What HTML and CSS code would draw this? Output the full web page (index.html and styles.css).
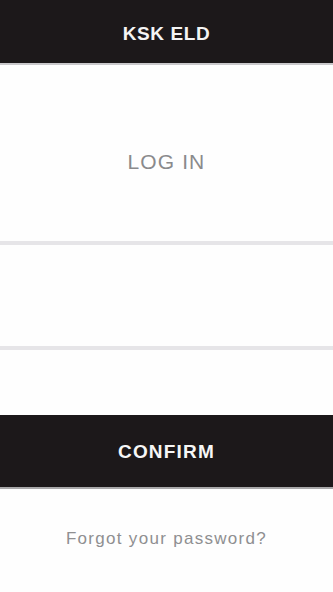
FILE: index.html
```html
<!DOCTYPE html>
<html>
<head>
<meta charset="utf-8">
<link rel="stylesheet" href="styles.css">
</head>
<body>
<div class="app">
  <header class="topbar"><span class="title">KSK ELD</span></header>
  <section class="heading"><h1 class="login">LOG IN</h1></section>
  <div class="field"></div>
  <div class="field field-last"></div>
  <button class="confirm">CONFIRM</button>
  <a class="forgot">Forgot your password?</a>
</div>
</body>
</html>
```
FILE: styles.css
```css
html, body {
  margin: 0;
  padding: 0;
  background: #fefefe;
}
body {
  font-family: "Liberation Sans", Arial, sans-serif;
}
.app {
  width: 333px;
  height: 592px;
  display: flex;
  flex-direction: column;
}
.topbar {
  padding-top: 4px;
  box-sizing: border-box;
  background: #1c181a;
  border-bottom: 2px solid #c9c8cb;
  display: flex;
  align-items: center;
  justify-content: center;
  flex: 0 0 65px;
}
.title {
  color: #f4f4f4;
  font-weight: bold;
  font-size: 19px;
  letter-spacing: 0.6px;
}
.heading {
  height: 176px;
  padding-top: 17px;
  box-sizing: border-box;
  display: flex;
  align-items: center;
  justify-content: center;
}
.login {
  margin: 0;
  font-weight: normal;
  font-size: 21px;
  color: #8a8a8c;
  letter-spacing: 1.1px;
}
.field {
  height: 101px;
  border-top: 4px solid #e6e5e8;
}
.field-last {
  height: 65px;
}
.confirm {
  height: 70px;
  border: none;
  border-bottom: 2px solid #a9a8aa;
  background: #1c181a;
  color: #f6f6f6;
  font-family: "Liberation Sans", Arial, sans-serif;
  font-weight: bold;
  font-size: 19px;
  letter-spacing: 1.2px;
  padding: 2px 0 0;
  box-sizing: content-box;
}
.forgot {
  margin-top: 40px;
  text-align: center;
  color: #8f8f91;
  font-size: 17px;
  letter-spacing: 1.3px;
}
```
